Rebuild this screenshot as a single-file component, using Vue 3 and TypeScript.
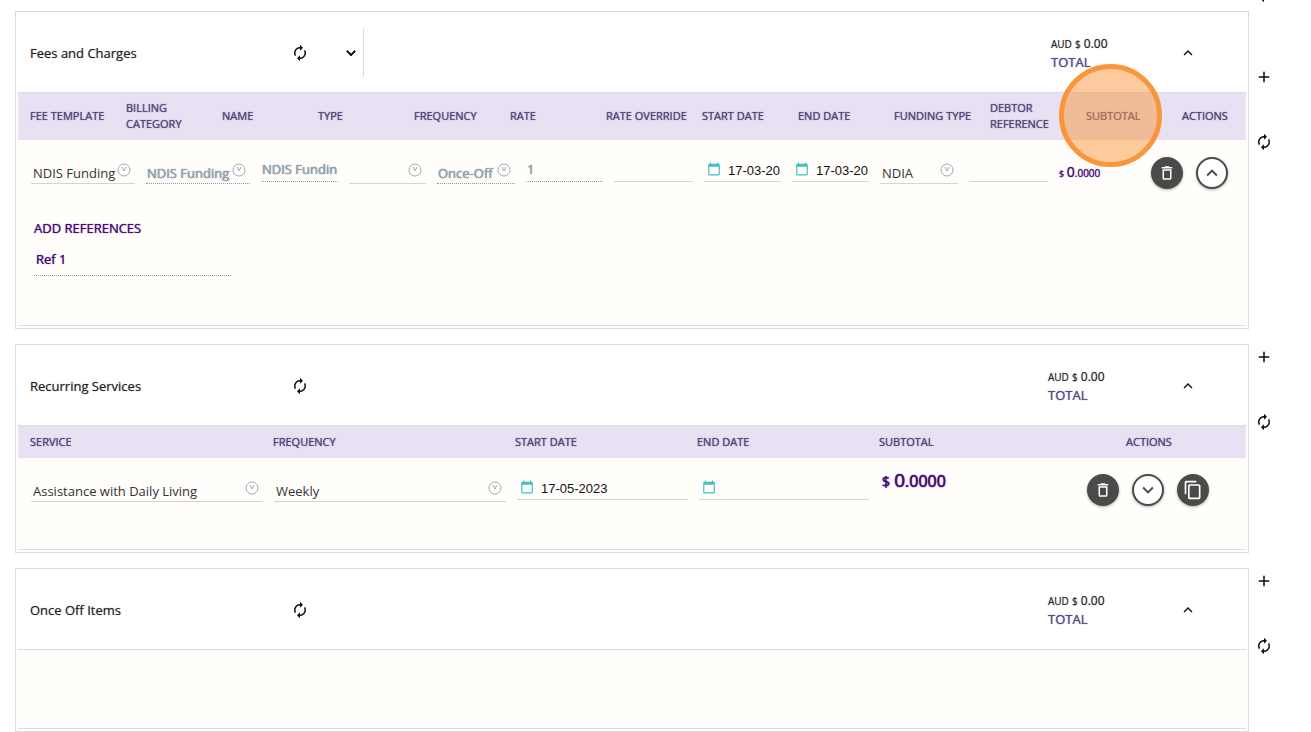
<script setup lang="ts">
import { reactive } from 'vue'

type Kind = 'select' | 'text' | 'date'

interface Field {
  id: string
  label: string
  kind: Kind
  value: string
  locked?: boolean
}

const icons = {
  renew:
    'M12 6v3l4-4-4-4v3c-4.42 0-8 3.58-8 8 0 1.57.46 3.03 1.24 4.26L6.7 14.8c-.45-.83-.7-1.79-.7-2.8 0-3.31 2.69-6 6-6zm6.76 1.74L17.3 9.2c.44.84.7 1.79.7 2.8 0 3.31-2.69 6-6 6v-3l-4 4 4 4v-3c4.42 0 8-3.58 8-8 0-1.57-.46-3.03-1.24-4.26z',
  down: 'M16.59 8.59L12 13.17 7.41 8.59 6 10l6 6 6-6z',
  up: 'M12 8l-6 6 1.41 1.41L12 10.83l4.59 4.58L18 14z',
  add: 'M19 13h-6v6h-2v-6H5v-2h6V5h2v6h6v2z',
  trash:
    'M6 19c0 1.1.9 2 2 2h8c1.1 0 2-.9 2-2V7H6v12zM8 9h8v10H8V9zm7.5-5l-1-1h-5l-1 1H5v2h14V4h-3.5z',
  copy: 'M16 1H4c-1.1 0-2 .9-2 2v14h2V3h12V1zm3 4H8c-1.1 0-2 .9-2 2v14c0 1.1.9 2 2 2h11c1.1 0 2-.9 2-2V7c0-1.1-.9-2-2-2zm0 16H8V7h11v14z',
  calendar:
    'M20 3h-1V1h-2v2H7V1H5v2H4c-1.1 0-2 .9-2 2v16c0 1.1.9 2 2 2h16c1.1 0 2-.9 2-2V5c0-1.1-.9-2-2-2zm0 18H4V8h16v13z',
}

const feeHeads = [
  'Fee template', 'Billing category', 'Name', 'Type', 'Frequency', 'Rate', 'Rate override',
  'Start date', 'End date', 'Funding type', 'Debtor reference', 'Subtotal', 'Actions',
]

const feeFields = reactive<Field[]>([
  { id: 'fee-template', label: 'Fee template', kind: 'select', value: 'NDIS Funding' },
  { id: 'fee-billing', label: 'Billing category', kind: 'select', value: 'NDIS Funding', locked: true },
  { id: 'fee-name', label: 'Name', kind: 'text', value: 'NDIS Fundin', locked: true },
  { id: 'fee-type', label: 'Type', kind: 'select', value: '' },
  { id: 'fee-frequency', label: 'Frequency', kind: 'select', value: 'Once-Off', locked: true },
  { id: 'fee-rate', label: 'Rate', kind: 'text', value: '1', locked: true },
  { id: 'fee-override', label: 'Rate override', kind: 'text', value: '' },
  { id: 'fee-start', label: 'Start date', kind: 'date', value: '17-03-20' },
  { id: 'fee-end', label: 'End date', kind: 'date', value: '17-03-20' },
  { id: 'fee-funding', label: 'Funding type', kind: 'select', value: 'NDIA' },
  { id: 'fee-debtor', label: 'Debtor reference', kind: 'text', value: '' },
])

const serviceHeads = ['Service', 'Frequency', 'Start date', 'End date', 'Subtotal', 'Actions']

const serviceFields = reactive<Field[]>([
  { id: 'service-name', label: 'Service', kind: 'select', value: 'Assistance with Daily Living' },
  { id: 'service-frequency', label: 'Frequency', kind: 'select', value: 'Weekly' },
  { id: 'service-start', label: 'Start date', kind: 'date', value: '17-05-2023' },
  { id: 'service-end', label: 'End date', kind: 'date', value: '' },
])

const sections = [
  { key: 'fees', title: 'Fees and Charges', heads: feeHeads, fields: feeFields },
  { key: 'services', title: 'Recurring Services', heads: serviceHeads, fields: serviceFields },
  { key: 'items', title: 'Once Off Items', heads: [] as string[], fields: [] as Field[] },
]
</script>

<template>
  <main class="page">
    <button type="button" class="plain scrolled" aria-label="Refresh previous section">
      <svg viewBox="0 0 24 24"><path :d="icons.renew" /></svg>
    </button>
    <section v-for="s in sections" :key="s.key" class="block" :class="s.key">
      <div class="panel">
        <header class="head">
          <h2>{{ s.title }}</h2>
          <div class="tools">
            <button type="button" class="plain" aria-label="Refresh">
              <svg viewBox="0 0 24 24"><path :d="icons.renew" /></svg>
            </button>
            <button v-if="s.key === 'fees'" type="button" class="plain" aria-label="More">
              <svg class="heavy" viewBox="0 0 24 24"><path :d="icons.down" /></svg>
            </button>
          </div>
          <div class="total">
            <div class="amount"><small>AUD</small> <small>$</small> 0<span>.00</span></div>
            <div class="caption">TOTAL</div>
          </div>
          <button type="button" class="plain" aria-label="Collapse">
            <svg viewBox="0 0 24 24"><path :d="icons.up" /></svg>
          </button>
        </header>

        <div class="body">
          <table v-if="s.heads.length">
            <thead>
              <tr>
                <th v-for="h in s.heads" :key="h" scope="col">
                  <span>{{ h }}</span>
                  <i v-if="s.key === 'fees' && h === 'Subtotal'" class="marker"></i>
                </th>
              </tr>
            </thead>
            <tbody>
              <tr>
                <td v-for="f in s.fields" :key="f.id">
                  <div class="field" :class="[f.kind, { locked: f.locked }]">
                    <svg v-if="f.kind === 'date'" class="cal" viewBox="0 0 24 24">
                      <path :d="icons.calendar" />
                    </svg>
                    <select v-if="f.kind === 'select'" :id="f.id" v-model="f.value" :aria-label="f.label" :disabled="f.locked">
                      <option :value="f.value">{{ f.value }}</option>
                    </select>
                    <input v-else :id="f.id" v-model="f.value" type="text" :aria-label="f.label" :disabled="f.locked" />
                    <svg v-if="f.kind === 'select'" class="drop" viewBox="0 0 14 14">
                      <circle cx="7" cy="7" r="6" />
                      <path d="M5 4L7 8L9 4" />
                    </svg>
                  </div>
                </td>
                <td class="subtotal"><small>$</small> <b>0</b><span>.0000</span></td>
                <td class="actions">
                  <button type="button" class="round dark" aria-label="Delete">
                    <svg viewBox="0 0 24 24"><path :d="icons.trash" /></svg>
                  </button>
                  <button type="button" class="round light" aria-label="Toggle details">
                    <svg viewBox="0 0 24 24"><path :d="s.key === 'fees' ? icons.up : icons.down" /></svg>
                  </button>
                  <button v-if="s.key === 'services'" type="button" class="round dark copy" aria-label="Copy">
                    <svg viewBox="0 0 24 24"><path :d="icons.copy" /></svg>
                  </button>
                </td>
              </tr>
            </tbody>
          </table>
          <div v-if="s.key === 'fees'" class="refs">
            <h3>ADD REFERENCES</h3>
            <input id="ref-1" type="text" value="Ref 1" aria-label="Reference 1" />
          </div>
        </div>
      </div>

      <aside class="rail">
        <button type="button" class="plain" aria-label="Add">
          <svg viewBox="0 0 24 24"><path :d="icons.add" /></svg>
        </button>
        <button type="button" class="plain" aria-label="Refresh section">
          <svg viewBox="0 0 24 24"><path :d="icons.renew" /></svg>
        </button>
      </aside>
    </section>
  </main>
</template>

<style>
body {
  margin: 0;
  background: #fff;
}
</style>

<style scoped>
* {
  box-sizing: border-box;
}
.page {
  position: relative;
  display: flex;
  flex-direction: column;
  gap: 15px;
  padding: 11px 33px 0 15px;
  overflow: hidden;
  font-family: "Open Sans", "Noto Sans", sans-serif;
  font-size: 13px;
  color: #333;
}
.block {
  display: grid;
  grid-template-columns: minmax(0, 1fr) 29px;
}
.panel {
  border: 1px solid #dcdcdc;
  padding: 0 2px 2px;
}
.head {
  display: flex;
  align-items: center;
  height: 80px;
  padding: 2px 49px 0 12px;
}
h2 {
  flex: 0 0 21%;
  margin: 0;
  font-size: 13px;
  font-weight: 500;
  line-height: 20px;
  color: #222;
  text-shadow: 0 0 1px rgba(34, 34, 34, 0.5);
}
.tools {
  display: flex;
  align-items: center;
  gap: 33px;
  height: 48px;
  padding: 0 3px 0 16px;
}
.fees .tools {
  border-right: 1px solid #dcdcdc;
}
button {
  display: flex;
  align-items: center;
  justify-content: center;
  margin: 0;
  padding: 0;
  border: 0;
  background: none;
  cursor: pointer;
}
.plain {
  width: 18px;
  height: 18px;
}
.plain svg {
  width: 18px;
  height: 18px;
  fill: #111;
}
.plain .heavy {
  stroke: #111;
  stroke-width: 1;
}
.scrolled {
  position: absolute;
  top: -15px;
  right: 38px;
}
.total {
  width: 131px;
  margin-left: auto;
  line-height: 18px;
}
.fees .total {
  width: 128px;
}
.amount {
  font-size: 12px;
  font-weight: 500;
  color: #222;
  text-shadow: 0 0 1px rgba(34, 34, 34, 0.5);
}
.amount small {
  font-size: 10px;
}
.caption {
  font-weight: 500;
  color: #5b4a85;
  text-shadow: 0 0 1px #5b4a85;
}
.body {
  border-top: 1px solid #dcdcdc;
  border-bottom: 1px solid #dcdcdc;
  background: #fffefa;
}
.fees .body {
  min-height: 234px;
}
.services .body {
  min-height: 125px;
}
.items .body {
  min-height: 80px;
}
table,
thead,
tbody {
  display: block;
}
tr {
  display: grid;
}
thead tr {
  align-items: center;
  height: 32px;
  padding: 0 0 1px 12px;
  background: #e7e1f3;
}
.fees thead tr {
  grid-template-columns: repeat(12, minmax(0, 96fr)) minmax(0, 64fr);
  height: 47px;
}
.services thead tr {
  grid-template-columns: 243fr 242fr 182fr 182fr 247fr 120fr;
}
th {
  position: relative;
  padding: 0;
  text-align: left;
  text-transform: uppercase;
  font-size: 11px;
  font-weight: 400;
  line-height: 16px;
  color: #56447c;
  text-shadow: 0 0 1px #56447c;
}
.fees th:nth-child(2) span,
.fees th:nth-child(11) span {
  display: block;
  width: 60px;
}
.marker {
  position: absolute;
  top: 50%;
  left: -27px;
  width: 103px;
  height: 103px;
  margin-top: -52px;
  border: 5px solid #f9963b;
  border-radius: 50%;
  background: rgba(249, 150, 59, 0.5);
  z-index: 2;
}
tbody tr {
  padding: 17px 0 0 13px;
}
.fees tbody tr {
  grid-template-columns: 115fr 115fr 88fr 88fr 89fr 88fr 90fr 88fr 88fr 89fr 90fr 92fr 95fr;
}
.services tbody tr {
  grid-template-columns: 243fr 243fr 182fr 181fr 207fr 159fr;
}
td {
  min-width: 0;
  padding: 0 11px 0 0;
}
.field {
  display: flex;
  align-items: center;
  height: 25px;
  border-bottom: 1px solid #d4d4d4;
}
.field.select {
  height: 27px;
}
.field.locked {
  border-bottom: 1px dotted #999;
}
.field select,
.field input {
  flex: 1;
  width: 0;
  min-width: 0;
  height: 20px;
  margin: 0;
  padding: 0 0 0 2px;
  border: 0;
  outline: 0;
  appearance: none;
  background: none;
  font: inherit;
  line-height: 20px;
  color: #333;
  opacity: 1;
}
.field select {
  align-self: flex-end;
}
.field.locked select,
.field.locked input {
  padding-left: 1px;
  font-weight: 500;
  color: #93a1ae;
  text-shadow: 0 0 1px #93a1ae, 0 0 1px #93a1ae;
}
.field.date input {
  height: 22px;
  padding: 2px 0 0 6px;
  font-family: "Liberation Sans", Arial, sans-serif;
  color: #111;
}
.cal {
  width: 14px;
  height: 14px;
  margin-left: 3px;
  flex: none;
  fill: #3fc1c0;
}
.field.date .cal + input {
  padding-left: 7px;
}
.drop {
  flex: none;
  width: 14px;
  height: 14px;
  margin-right: 4px;
  fill: none;
  stroke: #aaa4b4;
}
.subtotal {
  padding: 0;
  font-size: 10px;
  font-weight: 500;
  line-height: 30px;
  white-space: nowrap;
  color: #4b0a77;
  text-shadow: 0 0 1px #4b0a77;
}
.subtotal b {
  font-size: 14px;
  font-weight: 500;
}
.subtotal small {
  font-size: 9px;
}
.services .subtotal {
  padding-left: 2px;
  font-size: 16px;
  line-height: 11px;
  text-shadow: 0 0 1px #4b0a77, 0 0 1px #4b0a77;
}
.services .subtotal b {
  font-size: 19px;
}
.services .subtotal small {
  font-size: 14px;
}
.actions {
  display: flex;
  gap: 13px;
  padding: 0;
}
.services .actions {
  margin-top: -1px;
}
.round {
  flex: none;
  width: 32px;
  height: 32px;
  border-radius: 50%;
  box-shadow: 0 1px 3px rgba(0, 0, 0, 0.3);
}
.round svg {
  width: 18px;
  height: 18px;
}
.dark {
  background: #4a4a48;
}
.dark svg {
  fill: #fff;
}
.copy svg {
  width: 20px;
  height: 20px;
}
.light {
  border: 2px solid #4a4a48;
  background: #fff;
}
.light svg {
  width: 22px;
  height: 22px;
  fill: #4a4a48;
}
.refs {
  padding: 29px 16px 0;
}
h3 {
  margin: 0;
  font-size: 13px;
  font-weight: 500;
  line-height: 20px;
  color: #4b0a77;
  text-shadow: 0 0 1px #4b0a77;
}
.refs input {
  display: block;
  width: 197px;
  height: 38px;
  padding: 5px 0 0 2px;
  border: 0;
  border-bottom: 1px dotted #999;
  outline: 0;
  background: none;
  font: 500 13px/20px "Open Sans", "Noto Sans", sans-serif;
  color: #4b0a77;
  text-shadow: 0 0 1px #4b0a77;
}
.rail {
  display: flex;
  flex-direction: column;
  align-items: flex-end;
  gap: 47px;
  padding: 4px 5px 0 0;
}
.fees .rail {
  padding-top: 57px;
}
</style>
